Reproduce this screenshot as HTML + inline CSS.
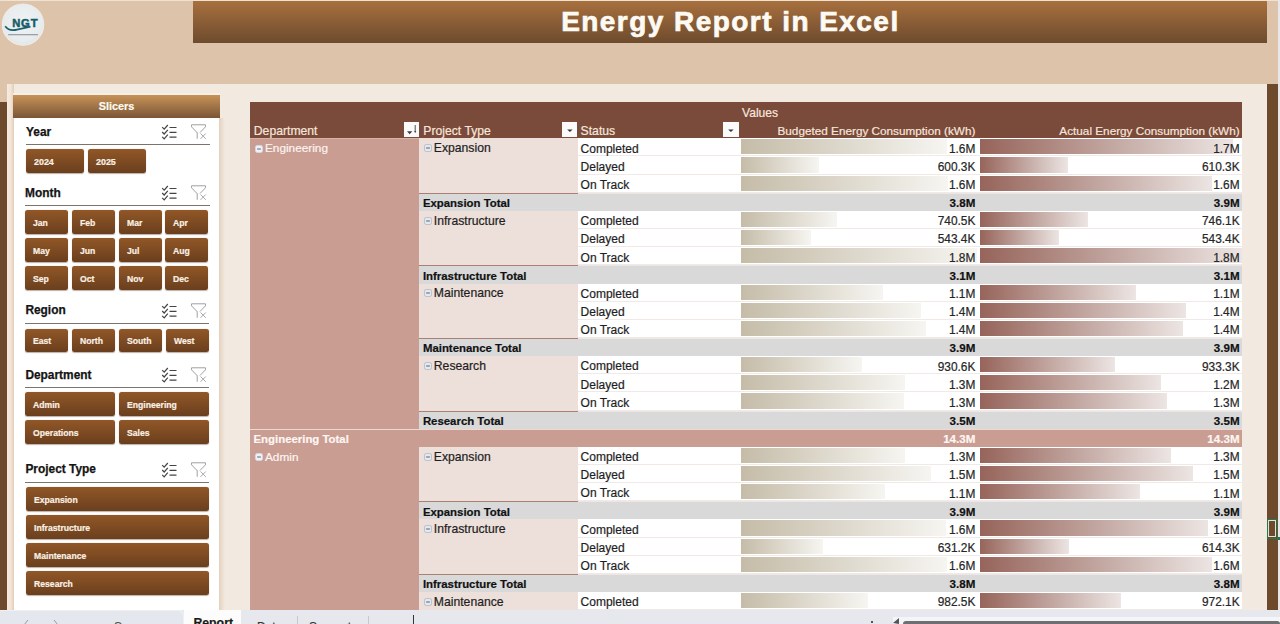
<!DOCTYPE html>
<html><head><meta charset="utf-8"><title>Energy Report in Excel</title>
<style>
html,body{margin:0;padding:0;}
body{width:1280px;height:624px;overflow:hidden;position:relative;background:#f2e9e1;font-family:"Liberation Sans",sans-serif;}
.a{position:absolute;}
.t{white-space:nowrap;-webkit-text-stroke:0.2px currentColor;}
.b{background:linear-gradient(#915727,#6a3f1e);border-radius:2.5px;box-shadow:0 0.5px 1px rgba(60,30,10,.35);}
</style></head><body>
<div class="a" style="left:0.00px;top:0.00px;width:1280.00px;height:84.00px;background:#dcc3a9;"></div><div class="a" style="left:0.00px;top:0.00px;width:1280.00px;height:1.00px;background:#eee2d4;"></div><div class="a" style="left:0.00px;top:84.00px;width:7.00px;height:18.00px;background:#dcc3a9;"></div><div class="a" style="left:0.00px;top:102.00px;width:7.00px;height:508.00px;background:#6e4a2c;"></div><div class="a" style="left:1267.00px;top:84.00px;width:11.00px;height:526.00px;background:#6e4a2c;"></div><div class="a" style="left:1278.00px;top:0.00px;width:2.00px;height:610.00px;background:#e9e6ea;"></div><div class="a" style="left:193.00px;top:1.00px;width:1074.00px;height:42.00px;background:linear-gradient(#a8703e,#6d4b2e);"></div><div class="a t" style="font-size:28px;line-height:35.00px;top:4.40px;color:#fdf9f3;font-weight:700;letter-spacing:1.45px;left:330.40px;width:800px;text-align:center;-webkit-text-stroke:0.7px #fdf9f3;">Energy Report in Excel</div><svg class="a" style="left:0px;top:0px" width="48" height="48" viewBox="0 0 48 48">
<defs><radialGradient id="lg" cx="50%" cy="45%" r="55%"><stop offset="0" stop-color="#f1f3f4"/><stop offset="0.8" stop-color="#e7ecee"/><stop offset="1" stop-color="#e3e6e6"/></radialGradient></defs>
<circle cx="23" cy="24.6" r="20.6" fill="url(#lg)" stroke="#f3ebe6" stroke-width="1.2"/>
<text x="25.3" y="27.2" text-anchor="middle" font-family="Liberation Sans" font-weight="700" font-size="11.2" fill="#165b69" letter-spacing="0.9" stroke="#165b69" stroke-width="0.5">NGT</text>
<path d="M5.2 26.2 Q9 31.5 17 29.6 Q24 28 30.5 26.6" stroke="#1b5f6b" stroke-width="1.7" fill="none"/>
<rect x="8.2" y="34" width="29.8" height="1.3" fill="#6a6e73" opacity="0.6"/>
</svg><div class="a" style="left:7.00px;top:84.00px;width:7.00px;height:526.00px;background:linear-gradient(90deg,#f6ece3 0%,#f1e4d8 55%,#e3cdb6 100%);"></div><div class="a" style="left:13.00px;top:93.00px;width:207.00px;height:2.00px;background:#f8f0e7;"></div><div class="a" style="left:13.00px;top:95.00px;width:207.00px;height:23.00px;background:linear-gradient(#c79258,#7a5636);"></div><div class="a t" style="font-size:10.8px;line-height:13.50px;top:100.01px;color:#fffaf2;font-weight:700;left:-283.50px;width:800px;text-align:center;">Slicers</div><div class="a" style="left:14.00px;top:118.00px;width:205.00px;height:492.00px;background:#fff;"></div><div class="a" style="left:219.00px;top:118.00px;width:6.00px;height:492.00px;background:linear-gradient(90deg,#e3d0bd,#f2e9e1);"></div><div class="a t" style="font-size:11.9px;line-height:14.88px;top:124.54px;color:#141414;font-weight:700;left:26.00px;-webkit-text-stroke:0.25px #141414;">Year</div><div class="a" style="left:26.00px;top:144.20px;width:183.50px;height:1.20px;background:#7c736b;"></div><svg class="a" style="left:160px;top:124.20px" width="50" height="17" viewBox="0 0 50 17">
<path d="M2.2 3.2 L4.2 5.2 L7.8 1" stroke="#444" stroke-width="1.2" fill="none"/>
<path d="M2.2 8 L4.2 10 L7.8 5.8" stroke="#444" stroke-width="1.2" fill="none"/>
<path d="M2.2 12.8 L4.2 14.8 L7.8 10.6" stroke="#444" stroke-width="1.2" fill="none"/>
<path d="M9.5 3.5 H16.5 M9.5 8.3 H16.5 M9.5 13.1 H16.5" stroke="#444" stroke-width="1.2"/>
<path d="M31.5 0.8 H45.5 V2.8 L40 8.5 M37.5 9 L31.5 2.8 V0.8 M37.2 8.8 V14.8" stroke="#a0a0a0" stroke-width="1" fill="none"/>
<path d="M40.5 9.5 L45.8 14.8 M45.8 9.5 L40.5 14.8" stroke="#a8a8a8" stroke-width="1" fill="none"/>
</svg><div class="a b" style="left:26.00px;top:149.40px;width:58.00px;height:24.00px;"></div><div class="a t" style="font-size:9.9px;line-height:12.38px;top:155.98px;color:#fbf1e6;font-weight:700;left:34.00px;transform:scaleX(0.9);transform-origin:0 0;">2024</div><div class="a b" style="left:88.00px;top:149.40px;width:58.00px;height:24.00px;"></div><div class="a t" style="font-size:9.9px;line-height:12.38px;top:155.98px;color:#fbf1e6;font-weight:700;left:96.00px;transform:scaleX(0.9);transform-origin:0 0;">2025</div><div class="a t" style="font-size:11.9px;line-height:14.88px;top:185.74px;color:#141414;font-weight:700;left:25.00px;-webkit-text-stroke:0.25px #141414;">Month</div><div class="a" style="left:25.00px;top:204.50px;width:184.50px;height:1.20px;background:#7c736b;"></div><svg class="a" style="left:160px;top:184.50px" width="50" height="17" viewBox="0 0 50 17">
<path d="M2.2 3.2 L4.2 5.2 L7.8 1" stroke="#444" stroke-width="1.2" fill="none"/>
<path d="M2.2 8 L4.2 10 L7.8 5.8" stroke="#444" stroke-width="1.2" fill="none"/>
<path d="M2.2 12.8 L4.2 14.8 L7.8 10.6" stroke="#444" stroke-width="1.2" fill="none"/>
<path d="M9.5 3.5 H16.5 M9.5 8.3 H16.5 M9.5 13.1 H16.5" stroke="#444" stroke-width="1.2"/>
<path d="M31.5 0.8 H45.5 V2.8 L40 8.5 M37.5 9 L31.5 2.8 V0.8 M37.2 8.8 V14.8" stroke="#a0a0a0" stroke-width="1" fill="none"/>
<path d="M40.5 9.5 L45.8 14.8 M45.8 9.5 L40.5 14.8" stroke="#a8a8a8" stroke-width="1" fill="none"/>
</svg><div class="a b" style="left:24.50px;top:210.00px;width:43.00px;height:23.70px;"></div><div class="a t" style="font-size:9.6px;line-height:12.00px;top:216.72px;color:#fbf1e6;font-weight:700;left:32.50px;transform:scaleX(0.9);transform-origin:0 0;">Jan</div><div class="a b" style="left:71.50px;top:210.00px;width:43.00px;height:23.70px;"></div><div class="a t" style="font-size:9.6px;line-height:12.00px;top:216.72px;color:#fbf1e6;font-weight:700;left:79.50px;transform:scaleX(0.9);transform-origin:0 0;">Feb</div><div class="a b" style="left:118.50px;top:210.00px;width:43.00px;height:23.70px;"></div><div class="a t" style="font-size:9.6px;line-height:12.00px;top:216.72px;color:#fbf1e6;font-weight:700;left:126.50px;transform:scaleX(0.9);transform-origin:0 0;">Mar</div><div class="a b" style="left:165.40px;top:210.00px;width:43.00px;height:23.70px;"></div><div class="a t" style="font-size:9.6px;line-height:12.00px;top:216.72px;color:#fbf1e6;font-weight:700;left:173.40px;transform:scaleX(0.9);transform-origin:0 0;">Apr</div><div class="a b" style="left:24.50px;top:238.00px;width:43.00px;height:23.70px;"></div><div class="a t" style="font-size:9.6px;line-height:12.00px;top:244.72px;color:#fbf1e6;font-weight:700;left:32.50px;transform:scaleX(0.9);transform-origin:0 0;">May</div><div class="a b" style="left:71.50px;top:238.00px;width:43.00px;height:23.70px;"></div><div class="a t" style="font-size:9.6px;line-height:12.00px;top:244.72px;color:#fbf1e6;font-weight:700;left:79.50px;transform:scaleX(0.9);transform-origin:0 0;">Jun</div><div class="a b" style="left:118.50px;top:238.00px;width:43.00px;height:23.70px;"></div><div class="a t" style="font-size:9.6px;line-height:12.00px;top:244.72px;color:#fbf1e6;font-weight:700;left:126.50px;transform:scaleX(0.9);transform-origin:0 0;">Jul</div><div class="a b" style="left:165.40px;top:238.00px;width:43.00px;height:23.70px;"></div><div class="a t" style="font-size:9.6px;line-height:12.00px;top:244.72px;color:#fbf1e6;font-weight:700;left:173.40px;transform:scaleX(0.9);transform-origin:0 0;">Aug</div><div class="a b" style="left:24.50px;top:266.00px;width:43.00px;height:23.70px;"></div><div class="a t" style="font-size:9.6px;line-height:12.00px;top:272.72px;color:#fbf1e6;font-weight:700;left:32.50px;transform:scaleX(0.9);transform-origin:0 0;">Sep</div><div class="a b" style="left:71.50px;top:266.00px;width:43.00px;height:23.70px;"></div><div class="a t" style="font-size:9.6px;line-height:12.00px;top:272.72px;color:#fbf1e6;font-weight:700;left:79.50px;transform:scaleX(0.9);transform-origin:0 0;">Oct</div><div class="a b" style="left:118.50px;top:266.00px;width:43.00px;height:23.70px;"></div><div class="a t" style="font-size:9.6px;line-height:12.00px;top:272.72px;color:#fbf1e6;font-weight:700;left:126.50px;transform:scaleX(0.9);transform-origin:0 0;">Nov</div><div class="a b" style="left:165.40px;top:266.00px;width:43.00px;height:23.70px;"></div><div class="a t" style="font-size:9.6px;line-height:12.00px;top:272.72px;color:#fbf1e6;font-weight:700;left:173.40px;transform:scaleX(0.9);transform-origin:0 0;">Dec</div><div class="a t" style="font-size:11.9px;line-height:14.88px;top:302.94px;color:#141414;font-weight:700;left:25.40px;-webkit-text-stroke:0.25px #141414;">Region</div><div class="a" style="left:25.40px;top:322.50px;width:184.10px;height:1.20px;background:#7c736b;"></div><svg class="a" style="left:160px;top:302.50px" width="50" height="17" viewBox="0 0 50 17">
<path d="M2.2 3.2 L4.2 5.2 L7.8 1" stroke="#444" stroke-width="1.2" fill="none"/>
<path d="M2.2 8 L4.2 10 L7.8 5.8" stroke="#444" stroke-width="1.2" fill="none"/>
<path d="M2.2 12.8 L4.2 14.8 L7.8 10.6" stroke="#444" stroke-width="1.2" fill="none"/>
<path d="M9.5 3.5 H16.5 M9.5 8.3 H16.5 M9.5 13.1 H16.5" stroke="#444" stroke-width="1.2"/>
<path d="M31.5 0.8 H45.5 V2.8 L40 8.5 M37.5 9 L31.5 2.8 V0.8 M37.2 8.8 V14.8" stroke="#a0a0a0" stroke-width="1" fill="none"/>
<path d="M40.5 9.5 L45.8 14.8 M45.8 9.5 L40.5 14.8" stroke="#a8a8a8" stroke-width="1" fill="none"/>
</svg><div class="a b" style="left:25.40px;top:328.80px;width:42.80px;height:23.50px;"></div><div class="a t" style="font-size:9.6px;line-height:12.00px;top:335.42px;color:#fbf1e6;font-weight:700;left:33.40px;transform:scaleX(0.9);transform-origin:0 0;">East</div><div class="a b" style="left:72.30px;top:328.80px;width:42.80px;height:23.50px;"></div><div class="a t" style="font-size:9.6px;line-height:12.00px;top:335.42px;color:#fbf1e6;font-weight:700;left:80.30px;transform:scaleX(0.9);transform-origin:0 0;">North</div><div class="a b" style="left:119.20px;top:328.80px;width:42.80px;height:23.50px;"></div><div class="a t" style="font-size:9.6px;line-height:12.00px;top:335.42px;color:#fbf1e6;font-weight:700;left:127.20px;transform:scaleX(0.9);transform-origin:0 0;">South</div><div class="a b" style="left:166.00px;top:328.80px;width:42.80px;height:23.50px;"></div><div class="a t" style="font-size:9.6px;line-height:12.00px;top:335.42px;color:#fbf1e6;font-weight:700;left:174.00px;transform:scaleX(0.9);transform-origin:0 0;">West</div><div class="a t" style="font-size:11.9px;line-height:14.88px;top:367.54px;color:#141414;font-weight:700;left:25.40px;-webkit-text-stroke:0.25px #141414;">Department</div><div class="a" style="left:25.40px;top:387.20px;width:184.10px;height:1.20px;background:#7c736b;"></div><svg class="a" style="left:160px;top:367.20px" width="50" height="17" viewBox="0 0 50 17">
<path d="M2.2 3.2 L4.2 5.2 L7.8 1" stroke="#444" stroke-width="1.2" fill="none"/>
<path d="M2.2 8 L4.2 10 L7.8 5.8" stroke="#444" stroke-width="1.2" fill="none"/>
<path d="M2.2 12.8 L4.2 14.8 L7.8 10.6" stroke="#444" stroke-width="1.2" fill="none"/>
<path d="M9.5 3.5 H16.5 M9.5 8.3 H16.5 M9.5 13.1 H16.5" stroke="#444" stroke-width="1.2"/>
<path d="M31.5 0.8 H45.5 V2.8 L40 8.5 M37.5 9 L31.5 2.8 V0.8 M37.2 8.8 V14.8" stroke="#a0a0a0" stroke-width="1" fill="none"/>
<path d="M40.5 9.5 L45.8 14.8 M45.8 9.5 L40.5 14.8" stroke="#a8a8a8" stroke-width="1" fill="none"/>
</svg><div class="a b" style="left:25.40px;top:392.30px;width:89.40px;height:23.60px;"></div><div class="a t" style="font-size:9.6px;line-height:12.00px;top:398.97px;color:#fbf1e6;font-weight:700;left:33.40px;transform:scaleX(0.9);transform-origin:0 0;">Admin</div><div class="a b" style="left:119.20px;top:392.30px;width:89.40px;height:23.60px;"></div><div class="a t" style="font-size:9.6px;line-height:12.00px;top:398.97px;color:#fbf1e6;font-weight:700;left:127.20px;transform:scaleX(0.9);transform-origin:0 0;">Engineering</div><div class="a b" style="left:25.40px;top:420.40px;width:89.40px;height:23.60px;"></div><div class="a t" style="font-size:9.6px;line-height:12.00px;top:427.07px;color:#fbf1e6;font-weight:700;left:33.40px;transform:scaleX(0.9);transform-origin:0 0;">Operations</div><div class="a b" style="left:119.20px;top:420.40px;width:89.40px;height:23.60px;"></div><div class="a t" style="font-size:9.6px;line-height:12.00px;top:427.07px;color:#fbf1e6;font-weight:700;left:127.20px;transform:scaleX(0.9);transform-origin:0 0;">Sales</div><div class="a t" style="font-size:11.9px;line-height:14.88px;top:461.74px;color:#141414;font-weight:700;left:25.40px;-webkit-text-stroke:0.25px #141414;">Project Type</div><div class="a" style="left:25.40px;top:481.50px;width:184.10px;height:1.20px;background:#7c736b;"></div><svg class="a" style="left:160px;top:461.50px" width="50" height="17" viewBox="0 0 50 17">
<path d="M2.2 3.2 L4.2 5.2 L7.8 1" stroke="#444" stroke-width="1.2" fill="none"/>
<path d="M2.2 8 L4.2 10 L7.8 5.8" stroke="#444" stroke-width="1.2" fill="none"/>
<path d="M2.2 12.8 L4.2 14.8 L7.8 10.6" stroke="#444" stroke-width="1.2" fill="none"/>
<path d="M9.5 3.5 H16.5 M9.5 8.3 H16.5 M9.5 13.1 H16.5" stroke="#444" stroke-width="1.2"/>
<path d="M31.5 0.8 H45.5 V2.8 L40 8.5 M37.5 9 L31.5 2.8 V0.8 M37.2 8.8 V14.8" stroke="#a0a0a0" stroke-width="1" fill="none"/>
<path d="M40.5 9.5 L45.8 14.8 M45.8 9.5 L40.5 14.8" stroke="#a8a8a8" stroke-width="1" fill="none"/>
</svg><div class="a b" style="left:25.50px;top:487.30px;width:183.30px;height:23.50px;"></div><div class="a t" style="font-size:9.6px;line-height:12.00px;top:493.92px;color:#fbf1e6;font-weight:700;left:33.50px;transform:scaleX(0.9);transform-origin:0 0;">Expansion</div><div class="a b" style="left:25.50px;top:515.25px;width:183.30px;height:23.50px;"></div><div class="a t" style="font-size:9.6px;line-height:12.00px;top:521.87px;color:#fbf1e6;font-weight:700;left:33.50px;transform:scaleX(0.9);transform-origin:0 0;">Infrastructure</div><div class="a b" style="left:25.50px;top:543.20px;width:183.30px;height:23.50px;"></div><div class="a t" style="font-size:9.6px;line-height:12.00px;top:549.82px;color:#fbf1e6;font-weight:700;left:33.50px;transform:scaleX(0.9);transform-origin:0 0;">Maintenance</div><div class="a b" style="left:25.50px;top:571.15px;width:183.30px;height:23.50px;"></div><div class="a t" style="font-size:9.6px;line-height:12.00px;top:577.77px;color:#fbf1e6;font-weight:700;left:33.50px;transform:scaleX(0.9);transform-origin:0 0;">Research</div><div class="a" style="left:250.00px;top:102.00px;width:992.00px;height:36.30px;background:#7a4a3a;"></div><div class="a t" style="font-size:12.1px;line-height:15.12px;top:105.74px;color:#f6e6dc;font-weight:400;left:742.00px;">Values</div><div class="a t" style="font-size:12.2px;line-height:15.25px;top:123.65px;color:#f6e6dc;font-weight:400;left:253.80px;">Department</div><div class="a t" style="font-size:12.2px;line-height:15.25px;top:123.65px;color:#f6e6dc;font-weight:400;left:423.30px;">Project Type</div><div class="a t" style="font-size:12.2px;line-height:15.25px;top:123.65px;color:#f6e6dc;font-weight:400;left:580.60px;">Status</div><div class="a t" style="font-size:11.75px;line-height:14.69px;top:124.08px;color:#f6e6dc;font-weight:400;left:375.40px;width:600px;text-align:right;">Budgeted Energy Consumption (kWh)</div><div class="a t" style="font-size:11.75px;line-height:14.69px;top:124.08px;color:#f6e6dc;font-weight:400;left:639.60px;width:600px;text-align:right;">Actual Energy Consumption (kWh)</div><div class="a" style="left:403.50px;top:121.8px;width:15.4px;height:15.2px;background:#fbfafb;"></div><svg class="a" style="left:403.50px;top:121.8px" width="16" height="16" viewBox="0 0 16 16"><path d="M3 9.3 H8.3 L5.65 12.2 Z" fill="#3a3a3a"/><path d="M11.2 3 V10" stroke="#333" stroke-width="0.85"/><path d="M10.1 9.3 H12.3 L11.2 10.9 Z" fill="#333"/></svg><div class="a" style="left:561.50px;top:121.8px;width:15.4px;height:15.2px;background:#fbfafb;"></div><svg class="a" style="left:561.50px;top:121.8px" width="16" height="16" viewBox="0 0 16 16"><path d="M5.2 7.4 H10.6 L7.9 10 Z" fill="#333"/></svg><div class="a" style="left:723.20px;top:121.8px;width:15.4px;height:15.2px;background:#fbfafb;"></div><svg class="a" style="left:723.20px;top:121.8px" width="16" height="16" viewBox="0 0 16 16"><path d="M5.2 7.4 H10.6 L7.9 10 Z" fill="#333"/></svg><div class="a" style="left:578.00px;top:138.00px;width:664.00px;height:18.00px;background:#fff;"></div><div class="a" style="left:578.00px;top:155.00px;width:664.00px;height:1.00px;background:#f1e9e6;"></div><div class="a" style="left:741.00px;top:139.40px;width:205.91px;height:15.10px;background:linear-gradient(90deg,#c5bca8,#f6f5f1);"></div><div class="a" style="left:979.50px;top:139.40px;width:253.34px;height:15.10px;background:linear-gradient(90deg,#96645a,#ece5e3);"></div><div class="a t" style="font-size:12px;line-height:15.00px;top:141.64px;color:#1e1e1e;font-weight:400;left:580.60px;">Completed</div><div class="a t" style="font-size:11.9px;line-height:14.88px;top:141.74px;color:#262626;font-weight:400;left:375.40px;width:600px;text-align:right;">1.6M</div><div class="a t" style="font-size:11.9px;line-height:14.88px;top:141.74px;color:#262626;font-weight:400;left:639.60px;width:600px;text-align:right;">1.7M</div><div class="a" style="left:578.00px;top:156.00px;width:664.00px;height:19.00px;background:#fff;"></div><div class="a" style="left:578.00px;top:174.00px;width:664.00px;height:1.00px;background:#f1e9e6;"></div><div class="a" style="left:741.00px;top:157.40px;width:77.74px;height:16.10px;background:linear-gradient(90deg,#c5bca8,#f6f5f1);"></div><div class="a" style="left:979.50px;top:157.40px;width:88.86px;height:16.10px;background:linear-gradient(90deg,#96645a,#ece5e3);"></div><div class="a t" style="font-size:12px;line-height:15.00px;top:159.79px;color:#1e1e1e;font-weight:400;left:580.60px;">Delayed</div><div class="a t" style="font-size:11.9px;line-height:14.88px;top:159.89px;color:#262626;font-weight:400;left:375.40px;width:600px;text-align:right;">600.3K</div><div class="a t" style="font-size:11.9px;line-height:14.88px;top:159.89px;color:#262626;font-weight:400;left:639.60px;width:600px;text-align:right;">610.3K</div><div class="a" style="left:578.00px;top:175.00px;width:664.00px;height:18.00px;background:#fff;"></div><div class="a" style="left:578.00px;top:192.00px;width:664.00px;height:1.00px;background:#f1e9e6;"></div><div class="a" style="left:741.00px;top:176.40px;width:207.20px;height:15.10px;background:linear-gradient(90deg,#c5bca8,#f6f5f1);"></div><div class="a" style="left:979.50px;top:176.40px;width:232.96px;height:15.10px;background:linear-gradient(90deg,#96645a,#ece5e3);"></div><div class="a t" style="font-size:12px;line-height:15.00px;top:177.94px;color:#1e1e1e;font-weight:400;left:580.60px;">On Track</div><div class="a t" style="font-size:11.9px;line-height:14.88px;top:178.04px;color:#262626;font-weight:400;left:375.40px;width:600px;text-align:right;">1.6M</div><div class="a t" style="font-size:11.9px;line-height:14.88px;top:178.04px;color:#262626;font-weight:400;left:639.60px;width:600px;text-align:right;">1.6M</div><div class="a" style="left:418.75px;top:138.00px;width:159.25px;height:56.00px;background:#eddfda;"></div><svg class="a" style="left:424.00px;top:144.10px" width="8" height="8" viewBox="0 0 8 8"><rect x="0.5" y="0.5" width="7" height="7" rx="1.8" fill="#e4e9ef" stroke="#b4bcc8" stroke-width="0.9"/><path d="M2.1 4 H5.9" stroke="#66707f" stroke-width="1.1"/></svg><div class="a t" style="font-size:12.2px;line-height:15.25px;top:141.25px;color:#1e1e1e;font-weight:400;left:433.80px;">Expansion</div><div class="a" style="left:418.75px;top:193.00px;width:823.25px;height:18.00px;background:#d9d9d9;"></div><div class="a" style="left:418.75px;top:193.00px;width:159.25px;height:1.00px;background:#a98072;"></div><div class="a" style="left:578.00px;top:193.00px;width:664.00px;height:1.00px;background:#ece6e4;"></div><div class="a t" style="font-size:11.4px;line-height:14.25px;top:196.27px;color:#111;font-weight:700;left:422.90px;">Expansion Total</div><div class="a t" style="font-size:11.6px;line-height:14.50px;top:196.08px;color:#111;font-weight:700;left:375.40px;width:600px;text-align:right;">3.8M</div><div class="a t" style="font-size:11.6px;line-height:14.50px;top:196.08px;color:#111;font-weight:700;left:639.60px;width:600px;text-align:right;">3.9M</div><div class="a" style="left:578.00px;top:211.00px;width:664.00px;height:18.00px;background:#fff;"></div><div class="a" style="left:578.00px;top:228.00px;width:664.00px;height:1.00px;background:#f1e9e6;"></div><div class="a" style="left:741.00px;top:212.40px;width:95.89px;height:15.10px;background:linear-gradient(90deg,#c5bca8,#f6f5f1);"></div><div class="a" style="left:979.50px;top:212.40px;width:108.63px;height:15.10px;background:linear-gradient(90deg,#96645a,#ece5e3);"></div><div class="a t" style="font-size:12px;line-height:15.00px;top:214.24px;color:#1e1e1e;font-weight:400;left:580.60px;">Completed</div><div class="a t" style="font-size:11.9px;line-height:14.88px;top:214.34px;color:#262626;font-weight:400;left:375.40px;width:600px;text-align:right;">740.5K</div><div class="a t" style="font-size:11.9px;line-height:14.88px;top:214.34px;color:#262626;font-weight:400;left:639.60px;width:600px;text-align:right;">746.1K</div><div class="a" style="left:578.00px;top:229.00px;width:664.00px;height:18.00px;background:#fff;"></div><div class="a" style="left:578.00px;top:246.00px;width:664.00px;height:1.00px;background:#f1e9e6;"></div><div class="a" style="left:741.00px;top:230.40px;width:70.37px;height:15.10px;background:linear-gradient(90deg,#c5bca8,#f6f5f1);"></div><div class="a" style="left:979.50px;top:230.40px;width:79.12px;height:15.10px;background:linear-gradient(90deg,#96645a,#ece5e3);"></div><div class="a t" style="font-size:12px;line-height:15.00px;top:232.39px;color:#1e1e1e;font-weight:400;left:580.60px;">Delayed</div><div class="a t" style="font-size:11.9px;line-height:14.88px;top:232.49px;color:#262626;font-weight:400;left:375.40px;width:600px;text-align:right;">543.4K</div><div class="a t" style="font-size:11.9px;line-height:14.88px;top:232.49px;color:#262626;font-weight:400;left:639.60px;width:600px;text-align:right;">543.4K</div><div class="a" style="left:578.00px;top:247.00px;width:664.00px;height:18.00px;background:#fff;"></div><div class="a" style="left:578.00px;top:264.00px;width:664.00px;height:1.00px;background:#f1e9e6;"></div><div class="a" style="left:741.00px;top:248.40px;width:235.69px;height:15.10px;background:linear-gradient(90deg,#c5bca8,#f6f5f1);"></div><div class="a" style="left:979.50px;top:248.40px;width:262.08px;height:15.10px;background:linear-gradient(90deg,#96645a,#ece5e3);"></div><div class="a t" style="font-size:12px;line-height:15.00px;top:250.54px;color:#1e1e1e;font-weight:400;left:580.60px;">On Track</div><div class="a t" style="font-size:11.9px;line-height:14.88px;top:250.64px;color:#262626;font-weight:400;left:375.40px;width:600px;text-align:right;">1.8M</div><div class="a t" style="font-size:11.9px;line-height:14.88px;top:250.64px;color:#262626;font-weight:400;left:639.60px;width:600px;text-align:right;">1.8M</div><div class="a" style="left:418.75px;top:211.00px;width:159.25px;height:55.00px;background:#eddfda;"></div><svg class="a" style="left:424.00px;top:216.70px" width="8" height="8" viewBox="0 0 8 8"><rect x="0.5" y="0.5" width="7" height="7" rx="1.8" fill="#e4e9ef" stroke="#b4bcc8" stroke-width="0.9"/><path d="M2.1 4 H5.9" stroke="#66707f" stroke-width="1.1"/></svg><div class="a t" style="font-size:12.2px;line-height:15.25px;top:213.85px;color:#1e1e1e;font-weight:400;left:433.80px;">Infrastructure</div><div class="a" style="left:418.75px;top:265.00px;width:823.25px;height:19.00px;background:#d9d9d9;"></div><div class="a" style="left:418.75px;top:265.00px;width:159.25px;height:1.00px;background:#a98072;"></div><div class="a" style="left:578.00px;top:265.00px;width:664.00px;height:1.00px;background:#ece6e4;"></div><div class="a t" style="font-size:11.4px;line-height:14.25px;top:268.87px;color:#111;font-weight:700;left:422.90px;">Infrastructure Total</div><div class="a t" style="font-size:11.6px;line-height:14.50px;top:268.68px;color:#111;font-weight:700;left:375.40px;width:600px;text-align:right;">3.1M</div><div class="a t" style="font-size:11.6px;line-height:14.50px;top:268.68px;color:#111;font-weight:700;left:639.60px;width:600px;text-align:right;">3.1M</div><div class="a" style="left:578.00px;top:284.00px;width:664.00px;height:18.00px;background:#fff;"></div><div class="a" style="left:578.00px;top:301.00px;width:664.00px;height:1.00px;background:#f1e9e6;"></div><div class="a" style="left:741.00px;top:285.40px;width:142.45px;height:15.10px;background:linear-gradient(90deg,#c5bca8,#f6f5f1);"></div><div class="a" style="left:979.50px;top:285.40px;width:156.96px;height:15.10px;background:linear-gradient(90deg,#96645a,#ece5e3);"></div><div class="a t" style="font-size:12px;line-height:15.00px;top:286.84px;color:#1e1e1e;font-weight:400;left:580.60px;">Completed</div><div class="a t" style="font-size:11.9px;line-height:14.88px;top:286.94px;color:#262626;font-weight:400;left:375.40px;width:600px;text-align:right;">1.1M</div><div class="a t" style="font-size:11.9px;line-height:14.88px;top:286.94px;color:#262626;font-weight:400;left:639.60px;width:600px;text-align:right;">1.1M</div><div class="a" style="left:578.00px;top:302.00px;width:664.00px;height:18.00px;background:#fff;"></div><div class="a" style="left:578.00px;top:319.00px;width:664.00px;height:1.00px;background:#f1e9e6;"></div><div class="a" style="left:741.00px;top:303.40px;width:180.00px;height:15.10px;background:linear-gradient(90deg,#c5bca8,#f6f5f1);"></div><div class="a" style="left:979.50px;top:303.40px;width:206.46px;height:15.10px;background:linear-gradient(90deg,#96645a,#ece5e3);"></div><div class="a t" style="font-size:12px;line-height:15.00px;top:304.99px;color:#1e1e1e;font-weight:400;left:580.60px;">Delayed</div><div class="a t" style="font-size:11.9px;line-height:14.88px;top:305.09px;color:#262626;font-weight:400;left:375.40px;width:600px;text-align:right;">1.4M</div><div class="a t" style="font-size:11.9px;line-height:14.88px;top:305.09px;color:#262626;font-weight:400;left:639.60px;width:600px;text-align:right;">1.4M</div><div class="a" style="left:578.00px;top:320.00px;width:664.00px;height:18.00px;background:#fff;"></div><div class="a" style="left:578.00px;top:337.00px;width:664.00px;height:1.00px;background:#f1e9e6;"></div><div class="a" style="left:741.00px;top:321.40px;width:185.19px;height:15.10px;background:linear-gradient(90deg,#c5bca8,#f6f5f1);"></div><div class="a" style="left:979.50px;top:321.40px;width:203.26px;height:15.10px;background:linear-gradient(90deg,#96645a,#ece5e3);"></div><div class="a t" style="font-size:12px;line-height:15.00px;top:323.14px;color:#1e1e1e;font-weight:400;left:580.60px;">On Track</div><div class="a t" style="font-size:11.9px;line-height:14.88px;top:323.24px;color:#262626;font-weight:400;left:375.40px;width:600px;text-align:right;">1.4M</div><div class="a t" style="font-size:11.9px;line-height:14.88px;top:323.24px;color:#262626;font-weight:400;left:639.60px;width:600px;text-align:right;">1.4M</div><div class="a" style="left:418.75px;top:284.00px;width:159.25px;height:55.00px;background:#eddfda;"></div><svg class="a" style="left:424.00px;top:289.30px" width="8" height="8" viewBox="0 0 8 8"><rect x="0.5" y="0.5" width="7" height="7" rx="1.8" fill="#e4e9ef" stroke="#b4bcc8" stroke-width="0.9"/><path d="M2.1 4 H5.9" stroke="#66707f" stroke-width="1.1"/></svg><div class="a t" style="font-size:12.2px;line-height:15.25px;top:286.45px;color:#1e1e1e;font-weight:400;left:433.80px;">Maintenance</div><div class="a" style="left:418.75px;top:338.00px;width:823.25px;height:18.00px;background:#d9d9d9;"></div><div class="a" style="left:418.75px;top:338.00px;width:159.25px;height:1.00px;background:#a98072;"></div><div class="a" style="left:578.00px;top:338.00px;width:664.00px;height:1.00px;background:#ece6e4;"></div><div class="a t" style="font-size:11.4px;line-height:14.25px;top:341.47px;color:#111;font-weight:700;left:422.90px;">Maintenance Total</div><div class="a t" style="font-size:11.6px;line-height:14.50px;top:341.28px;color:#111;font-weight:700;left:375.40px;width:600px;text-align:right;">3.9M</div><div class="a t" style="font-size:11.6px;line-height:14.50px;top:341.28px;color:#111;font-weight:700;left:639.60px;width:600px;text-align:right;">3.9M</div><div class="a" style="left:578.00px;top:356.00px;width:664.00px;height:18.00px;background:#fff;"></div><div class="a" style="left:578.00px;top:373.00px;width:664.00px;height:1.00px;background:#f1e9e6;"></div><div class="a" style="left:741.00px;top:357.40px;width:120.51px;height:15.10px;background:linear-gradient(90deg,#c5bca8,#f6f5f1);"></div><div class="a" style="left:979.50px;top:357.40px;width:135.89px;height:15.10px;background:linear-gradient(90deg,#96645a,#ece5e3);"></div><div class="a t" style="font-size:12px;line-height:15.00px;top:359.44px;color:#1e1e1e;font-weight:400;left:580.60px;">Completed</div><div class="a t" style="font-size:11.9px;line-height:14.88px;top:359.54px;color:#262626;font-weight:400;left:375.40px;width:600px;text-align:right;">930.6K</div><div class="a t" style="font-size:11.9px;line-height:14.88px;top:359.54px;color:#262626;font-weight:400;left:639.60px;width:600px;text-align:right;">933.3K</div><div class="a" style="left:578.00px;top:374.00px;width:664.00px;height:18.00px;background:#fff;"></div><div class="a" style="left:578.00px;top:391.00px;width:664.00px;height:1.00px;background:#f1e9e6;"></div><div class="a" style="left:741.00px;top:375.40px;width:164.47px;height:15.10px;background:linear-gradient(90deg,#c5bca8,#f6f5f1);"></div><div class="a" style="left:979.50px;top:375.40px;width:181.27px;height:15.10px;background:linear-gradient(90deg,#96645a,#ece5e3);"></div><div class="a t" style="font-size:12px;line-height:15.00px;top:377.59px;color:#1e1e1e;font-weight:400;left:580.60px;">Delayed</div><div class="a t" style="font-size:11.9px;line-height:14.88px;top:377.69px;color:#262626;font-weight:400;left:375.40px;width:600px;text-align:right;">1.3M</div><div class="a t" style="font-size:11.9px;line-height:14.88px;top:377.69px;color:#262626;font-weight:400;left:639.60px;width:600px;text-align:right;">1.2M</div><div class="a" style="left:578.00px;top:392.00px;width:664.00px;height:19.00px;background:#fff;"></div><div class="a" style="left:578.00px;top:410.00px;width:664.00px;height:1.00px;background:#f1e9e6;"></div><div class="a" style="left:741.00px;top:393.40px;width:163.17px;height:16.10px;background:linear-gradient(90deg,#c5bca8,#f6f5f1);"></div><div class="a" style="left:979.50px;top:393.40px;width:187.39px;height:16.10px;background:linear-gradient(90deg,#96645a,#ece5e3);"></div><div class="a t" style="font-size:12px;line-height:15.00px;top:395.74px;color:#1e1e1e;font-weight:400;left:580.60px;">On Track</div><div class="a t" style="font-size:11.9px;line-height:14.88px;top:395.84px;color:#262626;font-weight:400;left:375.40px;width:600px;text-align:right;">1.3M</div><div class="a t" style="font-size:11.9px;line-height:14.88px;top:395.84px;color:#262626;font-weight:400;left:639.60px;width:600px;text-align:right;">1.3M</div><div class="a" style="left:418.75px;top:356.00px;width:159.25px;height:56.00px;background:#eddfda;"></div><svg class="a" style="left:424.00px;top:361.90px" width="8" height="8" viewBox="0 0 8 8"><rect x="0.5" y="0.5" width="7" height="7" rx="1.8" fill="#e4e9ef" stroke="#b4bcc8" stroke-width="0.9"/><path d="M2.1 4 H5.9" stroke="#66707f" stroke-width="1.1"/></svg><div class="a t" style="font-size:12.2px;line-height:15.25px;top:359.05px;color:#1e1e1e;font-weight:400;left:433.80px;">Research</div><div class="a" style="left:418.75px;top:411.00px;width:823.25px;height:18.00px;background:#d9d9d9;"></div><div class="a" style="left:418.75px;top:411.00px;width:159.25px;height:1.00px;background:#a98072;"></div><div class="a" style="left:578.00px;top:411.00px;width:664.00px;height:1.00px;background:#ece6e4;"></div><div class="a t" style="font-size:11.4px;line-height:14.25px;top:414.07px;color:#111;font-weight:700;left:422.90px;">Research Total</div><div class="a t" style="font-size:11.6px;line-height:14.50px;top:413.88px;color:#111;font-weight:700;left:375.40px;width:600px;text-align:right;">3.5M</div><div class="a t" style="font-size:11.6px;line-height:14.50px;top:413.88px;color:#111;font-weight:700;left:639.60px;width:600px;text-align:right;">3.5M</div><div class="a" style="left:250.00px;top:138.00px;width:168.75px;height:291.00px;background:#c99d92;"></div><svg class="a" style="left:255.20px;top:144.50px" width="8" height="8" viewBox="0 0 8 8"><rect x="0.5" y="0.5" width="7" height="7" rx="1.8" fill="#eef1f5" stroke="#d5dae2" stroke-width="0.9"/><path d="M2.1 4 H5.9" stroke="#6d7786" stroke-width="1.1"/></svg><div class="a t" style="font-size:11.8px;line-height:14.75px;top:141.24px;color:#fcf4f1;font-weight:400;left:265.00px;">Engineering</div><div class="a" style="left:250.00px;top:429.00px;width:992.00px;height:18.00px;background:#c99d92;"></div><div class="a" style="left:250.00px;top:429.00px;width:992.00px;height:1.00px;background:#eed8d0;"></div><div class="a" style="left:250.00px;top:447.00px;width:992.00px;height:1.00px;background:#eed8d0;"></div><div class="a t" style="font-size:11.4px;line-height:14.25px;top:432.42px;color:#fdf6f3;font-weight:700;left:253.50px;">Engineering Total</div><div class="a t" style="font-size:11.6px;line-height:14.50px;top:432.23px;color:#fdf6f3;font-weight:700;left:375.40px;width:600px;text-align:right;">14.3M</div><div class="a t" style="font-size:11.6px;line-height:14.50px;top:432.23px;color:#fdf6f3;font-weight:700;left:639.60px;width:600px;text-align:right;">14.3M</div><div class="a" style="left:578.00px;top:447.00px;width:664.00px;height:18.00px;background:#fff;"></div><div class="a" style="left:578.00px;top:464.00px;width:664.00px;height:1.00px;background:#f1e9e6;"></div><div class="a" style="left:741.00px;top:448.40px;width:163.82px;height:15.10px;background:linear-gradient(90deg,#c5bca8,#f6f5f1);"></div><div class="a" style="left:979.50px;top:448.40px;width:191.46px;height:15.10px;background:linear-gradient(90deg,#96645a,#ece5e3);"></div><div class="a t" style="font-size:12px;line-height:15.00px;top:450.19px;color:#1e1e1e;font-weight:400;left:580.60px;">Completed</div><div class="a t" style="font-size:11.9px;line-height:14.88px;top:450.29px;color:#262626;font-weight:400;left:375.40px;width:600px;text-align:right;">1.3M</div><div class="a t" style="font-size:11.9px;line-height:14.88px;top:450.29px;color:#262626;font-weight:400;left:639.60px;width:600px;text-align:right;">1.3M</div><div class="a" style="left:578.00px;top:465.00px;width:664.00px;height:18.00px;background:#fff;"></div><div class="a" style="left:578.00px;top:482.00px;width:664.00px;height:1.00px;background:#f1e9e6;"></div><div class="a" style="left:741.00px;top:466.40px;width:190.37px;height:15.10px;background:linear-gradient(90deg,#c5bca8,#f6f5f1);"></div><div class="a" style="left:979.50px;top:466.40px;width:213.74px;height:15.10px;background:linear-gradient(90deg,#96645a,#ece5e3);"></div><div class="a t" style="font-size:12px;line-height:15.00px;top:468.34px;color:#1e1e1e;font-weight:400;left:580.60px;">Delayed</div><div class="a t" style="font-size:11.9px;line-height:14.88px;top:468.44px;color:#262626;font-weight:400;left:375.40px;width:600px;text-align:right;">1.5M</div><div class="a t" style="font-size:11.9px;line-height:14.88px;top:468.44px;color:#262626;font-weight:400;left:639.60px;width:600px;text-align:right;">1.5M</div><div class="a" style="left:578.00px;top:483.00px;width:664.00px;height:18.00px;background:#fff;"></div><div class="a" style="left:578.00px;top:500.00px;width:664.00px;height:1.00px;background:#f1e9e6;"></div><div class="a" style="left:741.00px;top:484.40px;width:143.75px;height:15.10px;background:linear-gradient(90deg,#c5bca8,#f6f5f1);"></div><div class="a" style="left:979.50px;top:484.40px;width:160.31px;height:15.10px;background:linear-gradient(90deg,#96645a,#ece5e3);"></div><div class="a t" style="font-size:12px;line-height:15.00px;top:486.49px;color:#1e1e1e;font-weight:400;left:580.60px;">On Track</div><div class="a t" style="font-size:11.9px;line-height:14.88px;top:486.59px;color:#262626;font-weight:400;left:375.40px;width:600px;text-align:right;">1.1M</div><div class="a t" style="font-size:11.9px;line-height:14.88px;top:486.59px;color:#262626;font-weight:400;left:639.60px;width:600px;text-align:right;">1.1M</div><div class="a" style="left:418.75px;top:447.00px;width:159.25px;height:55.00px;background:#eddfda;"></div><svg class="a" style="left:424.00px;top:452.65px" width="8" height="8" viewBox="0 0 8 8"><rect x="0.5" y="0.5" width="7" height="7" rx="1.8" fill="#e4e9ef" stroke="#b4bcc8" stroke-width="0.9"/><path d="M2.1 4 H5.9" stroke="#66707f" stroke-width="1.1"/></svg><div class="a t" style="font-size:12.2px;line-height:15.25px;top:449.80px;color:#1e1e1e;font-weight:400;left:433.80px;">Expansion</div><div class="a" style="left:418.75px;top:501.00px;width:823.25px;height:18.00px;background:#d9d9d9;"></div><div class="a" style="left:418.75px;top:501.00px;width:159.25px;height:1.00px;background:#a98072;"></div><div class="a" style="left:578.00px;top:501.00px;width:664.00px;height:1.00px;background:#ece6e4;"></div><div class="a t" style="font-size:11.4px;line-height:14.25px;top:504.82px;color:#111;font-weight:700;left:422.90px;">Expansion Total</div><div class="a t" style="font-size:11.6px;line-height:14.50px;top:504.63px;color:#111;font-weight:700;left:375.40px;width:600px;text-align:right;">3.9M</div><div class="a t" style="font-size:11.6px;line-height:14.50px;top:504.63px;color:#111;font-weight:700;left:639.60px;width:600px;text-align:right;">3.9M</div><div class="a" style="left:578.00px;top:519.00px;width:664.00px;height:19.00px;background:#fff;"></div><div class="a" style="left:578.00px;top:537.00px;width:664.00px;height:1.00px;background:#f1e9e6;"></div><div class="a" style="left:741.00px;top:520.40px;width:204.61px;height:16.10px;background:linear-gradient(90deg,#c5bca8,#f6f5f1);"></div><div class="a" style="left:979.50px;top:520.40px;width:228.30px;height:16.10px;background:linear-gradient(90deg,#96645a,#ece5e3);"></div><div class="a t" style="font-size:12px;line-height:15.00px;top:522.79px;color:#1e1e1e;font-weight:400;left:580.60px;">Completed</div><div class="a t" style="font-size:11.9px;line-height:14.88px;top:522.89px;color:#262626;font-weight:400;left:375.40px;width:600px;text-align:right;">1.6M</div><div class="a t" style="font-size:11.9px;line-height:14.88px;top:522.89px;color:#262626;font-weight:400;left:639.60px;width:600px;text-align:right;">1.6M</div><div class="a" style="left:578.00px;top:538.00px;width:664.00px;height:18.00px;background:#fff;"></div><div class="a" style="left:578.00px;top:555.00px;width:664.00px;height:1.00px;background:#f1e9e6;"></div><div class="a" style="left:741.00px;top:539.40px;width:81.74px;height:15.10px;background:linear-gradient(90deg,#c5bca8,#f6f5f1);"></div><div class="a" style="left:979.50px;top:539.40px;width:89.44px;height:15.10px;background:linear-gradient(90deg,#96645a,#ece5e3);"></div><div class="a t" style="font-size:12px;line-height:15.00px;top:540.94px;color:#1e1e1e;font-weight:400;left:580.60px;">Delayed</div><div class="a t" style="font-size:11.9px;line-height:14.88px;top:541.04px;color:#262626;font-weight:400;left:375.40px;width:600px;text-align:right;">631.2K</div><div class="a t" style="font-size:11.9px;line-height:14.88px;top:541.04px;color:#262626;font-weight:400;left:639.60px;width:600px;text-align:right;">614.3K</div><div class="a" style="left:578.00px;top:556.00px;width:664.00px;height:18.00px;background:#fff;"></div><div class="a" style="left:578.00px;top:573.00px;width:664.00px;height:1.00px;background:#f1e9e6;"></div><div class="a" style="left:741.00px;top:557.40px;width:205.91px;height:15.10px;background:linear-gradient(90deg,#c5bca8,#f6f5f1);"></div><div class="a" style="left:979.50px;top:557.40px;width:232.96px;height:15.10px;background:linear-gradient(90deg,#96645a,#ece5e3);"></div><div class="a t" style="font-size:12px;line-height:15.00px;top:559.09px;color:#1e1e1e;font-weight:400;left:580.60px;">On Track</div><div class="a t" style="font-size:11.9px;line-height:14.88px;top:559.19px;color:#262626;font-weight:400;left:375.40px;width:600px;text-align:right;">1.6M</div><div class="a t" style="font-size:11.9px;line-height:14.88px;top:559.19px;color:#262626;font-weight:400;left:639.60px;width:600px;text-align:right;">1.6M</div><div class="a" style="left:418.75px;top:519.00px;width:159.25px;height:56.00px;background:#eddfda;"></div><svg class="a" style="left:424.00px;top:525.25px" width="8" height="8" viewBox="0 0 8 8"><rect x="0.5" y="0.5" width="7" height="7" rx="1.8" fill="#e4e9ef" stroke="#b4bcc8" stroke-width="0.9"/><path d="M2.1 4 H5.9" stroke="#66707f" stroke-width="1.1"/></svg><div class="a t" style="font-size:12.2px;line-height:15.25px;top:522.40px;color:#1e1e1e;font-weight:400;left:433.80px;">Infrastructure</div><div class="a" style="left:418.75px;top:574.00px;width:823.25px;height:18.00px;background:#d9d9d9;"></div><div class="a" style="left:418.75px;top:574.00px;width:159.25px;height:1.00px;background:#a98072;"></div><div class="a" style="left:578.00px;top:574.00px;width:664.00px;height:1.00px;background:#ece6e4;"></div><div class="a t" style="font-size:11.4px;line-height:14.25px;top:577.42px;color:#111;font-weight:700;left:422.90px;">Infrastructure Total</div><div class="a t" style="font-size:11.6px;line-height:14.50px;top:577.23px;color:#111;font-weight:700;left:375.40px;width:600px;text-align:right;">3.8M</div><div class="a t" style="font-size:11.6px;line-height:14.50px;top:577.23px;color:#111;font-weight:700;left:639.60px;width:600px;text-align:right;">3.8M</div><div class="a" style="left:578.00px;top:592.00px;width:664.00px;height:18.00px;background:#fff;"></div><div class="a" style="left:578.00px;top:609.00px;width:664.00px;height:1.00px;background:#f1e9e6;"></div><div class="a" style="left:741.00px;top:593.40px;width:127.23px;height:15.10px;background:linear-gradient(90deg,#c5bca8,#f6f5f1);"></div><div class="a" style="left:979.50px;top:593.40px;width:141.54px;height:15.10px;background:linear-gradient(90deg,#96645a,#ece5e3);"></div><div class="a t" style="font-size:12px;line-height:15.00px;top:595.39px;color:#1e1e1e;font-weight:400;left:580.60px;">Completed</div><div class="a t" style="font-size:11.9px;line-height:14.88px;top:595.49px;color:#262626;font-weight:400;left:375.40px;width:600px;text-align:right;">982.5K</div><div class="a t" style="font-size:11.9px;line-height:14.88px;top:595.49px;color:#262626;font-weight:400;left:639.60px;width:600px;text-align:right;">972.1K</div><div class="a" style="left:418.75px;top:592.00px;width:159.25px;height:19.00px;background:#eddfda;"></div><svg class="a" style="left:424.00px;top:597.85px" width="8" height="8" viewBox="0 0 8 8"><rect x="0.5" y="0.5" width="7" height="7" rx="1.8" fill="#e4e9ef" stroke="#b4bcc8" stroke-width="0.9"/><path d="M2.1 4 H5.9" stroke="#66707f" stroke-width="1.1"/></svg><div class="a t" style="font-size:12.2px;line-height:15.25px;top:595.00px;color:#1e1e1e;font-weight:400;left:433.80px;">Maintenance</div><div class="a" style="left:250.00px;top:447.00px;width:168.75px;height:163.00px;background:#c99d92;"></div><svg class="a" style="left:255.20px;top:453.05px" width="8" height="8" viewBox="0 0 8 8"><rect x="0.5" y="0.5" width="7" height="7" rx="1.8" fill="#eef1f5" stroke="#d5dae2" stroke-width="0.9"/><path d="M2.1 4 H5.9" stroke="#6d7786" stroke-width="1.1"/></svg><div class="a t" style="font-size:11.8px;line-height:14.75px;top:449.79px;color:#fcf4f1;font-weight:400;left:265.00px;">Admin</div><div class="a" style="left:250.00px;top:138.30px;width:168.75px;height:1.00px;background:#d9b3a7;"></div><div class="a" style="left:0.00px;top:610.00px;width:1280.00px;height:14.00px;background:#e6e8ee;"></div><div class="a" style="left:0.00px;top:610.00px;width:184.00px;height:14.00px;background:#e4e7ed;border-top-right-radius:5px;box-shadow:inset -1px 1px 0 #eef0f4;"></div><div class="a" style="left:184.00px;top:610.00px;width:57.00px;height:14.00px;background:#fcfcfd;"></div><div class="a t" style="font-size:12.3px;line-height:15.38px;top:615.55px;color:#1a1a1a;font-weight:700;left:193.40px;">Report</div><div class="a t" style="font-size:12px;line-height:15.00px;top:619.84px;color:#333;font-weight:400;left:257.00px;">Data</div><div class="a t" style="font-size:12px;line-height:15.00px;top:619.84px;color:#333;font-weight:400;left:309.00px;">Support</div><div class="a" style="left:297.00px;top:615.50px;width:1.00px;height:9.00px;background:#c8c8cc;"></div><div class="a" style="left:368.00px;top:615.50px;width:1.00px;height:9.00px;background:#c8c8cc;"></div><div class="a" style="left:412.50px;top:615.00px;width:1.00px;height:9.00px;background:#333;"></div><svg class="a" style="left:20px;top:617.5px" width="44" height="8" viewBox="0 0 44 8"><path d="M8 2 L4 7 M34 2 L38 7" stroke="#999" stroke-width="1" fill="none"/></svg><div class="a t" style="font-size:12px;line-height:15.00px;top:620.14px;color:#555;font-weight:400;left:114.00px;">S</div><div class="a" style="left:871.00px;top:621.00px;width:2.00px;height:2.00px;background:#222;border-radius:1px;"></div><div class="a" style="left:893.00px;top:617.00px;width:387.00px;height:7.00px;background:#f4f5f8;"></div><svg class="a" style="left:890px;top:618px" width="12" height="6" viewBox="0 0 12 6"><path d="M3 5 L9 0 L9 6 Z" fill="#555"/></svg><div class="a" style="left:903.40px;top:620.90px;width:376.60px;height:6.00px;background:#6f6f71;border-radius:3px;"></div><div class="a" style="left:1266.5px;top:518.5px;width:11.5px;height:20.5px;border:1.6px solid #2b7449;box-sizing:border-box;"></div><div class="a" style="left:1268.1px;top:520.1px;width:8.3px;height:17.3px;border:1px solid #d8e6dc;box-sizing:border-box;"></div><div class="a" style="left:1276.50px;top:536.50px;width:3.50px;height:3.50px;background:#2b7449;"></div>
</body></html>
